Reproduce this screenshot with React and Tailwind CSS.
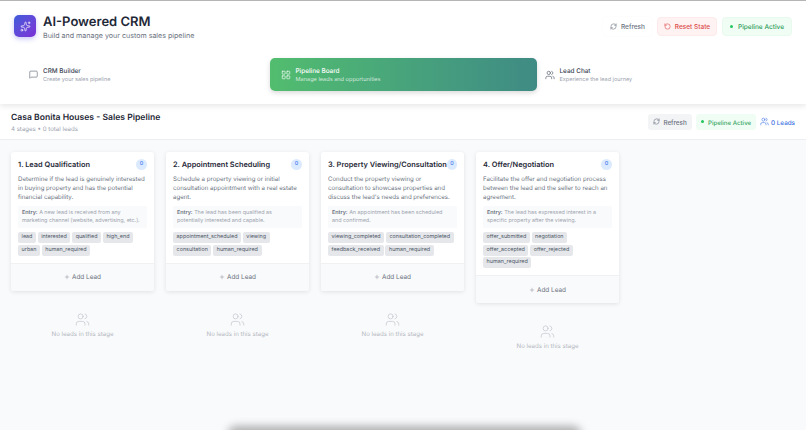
import React from "react";
import { MessageSquare, LayoutGrid, Users, RefreshCw, RotateCcw, Plus, Sparkles } from "lucide-react";

const stages = [
  {
    title: "1. Lead Qualification",
    desc: "Determine if the lead is genuinely interested in buying property and has the potential financial capability.",
    entry: "A new lead is received from any marketing channel (website, advertising, etc.).",
    tags: ["lead", "interested", "qualified", "high_end", "urban", "human_required"],
  },
  {
    title: "2. Appointment Scheduling",
    desc: "Schedule a property viewing or initial consultation appointment with a real estate agent.",
    entry: "The lead has been qualified as potentially interested and capable.",
    tags: ["appointment_scheduled", "viewing", "consultation", "human_required"],
  },
  {
    title: "3. Property Viewing/Consultation",
    desc: "Conduct the property viewing or consultation to showcase properties and discuss the lead's needs and preferences.",
    entry: "An appointment has been scheduled and confirmed.",
    tags: ["viewing_completed", "consultation_completed", "feedback_received", "human_required"],
  },
  {
    title: "4. Offer/Negotiation",
    desc: "Facilitate the offer and negotiation process between the lead and the seller to reach an agreement.",
    entry: "The lead has expressed interest in a specific property after the viewing.",
    tags: ["offer_submitted", "negotiation", "offer_accepted", "offer_rejected", "human_required"],
  },
];

function StageColumn({ stage }) {
  return (
    <div className="w-[143px] shrink-0">
      <div className="bg-white rounded-[3px] shadow-[0_1px_4px_rgba(0,0,0,0.1)] overflow-hidden">
        <div className="px-[7px] pt-[7px] pb-[7px]">
          <div className="flex items-center justify-between h-[11px]">
            <h3 className="text-[7.4px] leading-[11px] font-semibold text-[#1f2937] whitespace-nowrap">{stage.title}</h3>
            <span className="w-[11px] h-[11px] rounded-full bg-[#dbeafe] text-[#2563eb] text-[5.5px] flex items-center justify-center">0</span>
          </div>
          <p className="mt-[5px] text-[6.1px] leading-[9px] text-[#6b7280]">{stage.desc}</p>
          <div className="mt-[4px] bg-[#f9fafb] rounded-[2px] pl-[4px] pr-[6px] py-[3px] text-[5.4px] leading-[8px] text-[#9ca3af]">
            <b className="font-semibold text-[#6b7280]">Entry:</b> {stage.entry}
          </div>
          <div className="mt-[4px] flex flex-wrap gap-[1.7px]">
            {stage.tags.map((tag) => (
              <span key={tag} className="h-[11px] px-[3.6px] rounded-[2px] bg-[#e5e7eb] text-[5.4px] leading-[11px] text-[#4b5563]">
                {tag}
              </span>
            ))}
          </div>
        </div>
        <div className="h-[28px] bg-[#f9fafb] border-t border-[#f0f1f3] flex items-center justify-center gap-[2px] text-[6.4px] text-[#6b7280]">
          <Plus size={6} strokeWidth={1.5} />
          <span className="pt-[2px]">Add Lead</span>
        </div>
      </div>
      <div className="mt-[21px] flex flex-col items-center">
        <Users size={15} strokeWidth={1.2} className="text-[#c4c8cf]" />
        <p className="mt-[3px] text-[6.1px] leading-[9px] text-[#b4b8c0]">No leads in this stage</p>
      </div>
    </div>
  );
}

export default function App() {
  return (
    <div className="relative w-[806px] h-[430px] overflow-hidden bg-[#f9fafb] font-['Inter',sans-serif] [text-rendering:geometricPrecision]">
      {/* TOP HEADER */}
      <header className="relative z-10 h-[104px] bg-white border-t border-[#b5b5b5] shadow-[0_2px_6px_rgba(0,0,0,0.1)]">
        <div className="flex items-center justify-between pl-[14px] pr-[14px] pt-[10px]">
          <div className="flex items-center gap-[7px]">
            <div className="w-[22px] h-[22px] rounded-[5px] bg-gradient-to-br from-[#3b5bdb] to-[#7c2ed6] flex items-center justify-center shadow-[0_2px_5px_rgba(79,70,229,0.3)]">
              <Sparkles size={11} strokeWidth={1.5} className="text-white" />
            </div>
            <div className="pt-[2px]">
              <h1 className="text-[13px] leading-[18px] font-semibold text-[#1f2937]">AI-Powered CRM</h1>
              <p className="text-[7.1px] leading-[10px] text-[#6b7280]">Build and manage your custom sales pipeline</p>
            </div>
          </div>
          <div className="flex items-center gap-[5px]">
            <button className="w-[49px] h-[19px] rounded-[4px] bg-white shadow-[0_0_2px_rgba(0,0,0,0.04)] flex items-center justify-center gap-[4px] text-[6.5px] leading-[9px] font-medium text-[#6b7280]">
              <RefreshCw size={7} />
              <span className="pt-[3px]">Refresh</span>
            </button>
            <button className="w-[60px] h-[19px] rounded-[4px] bg-[#fef2f2] border border-[#fdeaea] flex items-center justify-center gap-[4px] text-[6.5px] leading-[9px] font-medium text-[#dc4a4a]">
              <RotateCcw size={7} />
              <span className="pt-[3px]">Reset State</span>
            </button>
            <div className="w-[70px] h-[19px] rounded-[4px] bg-[#f0fdf4] border border-[#e8faee] flex items-center justify-center gap-[5px] text-[6.5px] leading-[9px] font-medium text-[#2f9e5c]">
              <span className="w-[3px] h-[3px] rounded-full bg-[#22c55e]" />
              <span className="pt-[3px]">Pipeline Active</span>
            </div>
          </div>
        </div>
        <nav className="mt-[17px] flex h-[33px] pl-[3px] pr-[3px]">
          <div className="w-[266.5px] flex items-center gap-[5px] pl-[26px]">
            <MessageSquare size={9} strokeWidth={1.5} className="text-[#4b5563]" />
            <div className="pt-[1px]">
              <div className="text-[6.4px] leading-[10px] font-medium text-[#374151]">CRM Builder</div>
              <div className="text-[5.5px] leading-[8px] text-[#9ca3af]">Create your sales pipeline</div>
            </div>
          </div>
          <div className="w-[267px] rounded-[5px] bg-gradient-to-r from-[#52bd6e] to-[#3f8b84] shadow-[0_2px_5px_rgba(0,0,0,0.15)] flex items-center gap-[5px] pl-[11px] text-white">
            <LayoutGrid size={10} strokeWidth={1.5} />
            <div className="pt-[1px]">
              <div className="text-[6.4px] leading-[10px] font-medium">Pipeline Board</div>
              <div className="text-[5.6px] leading-[8px] text-white/75">Manage leads and opportunities</div>
            </div>
          </div>
          <div className="flex-1 flex items-center gap-[5px] pl-[8px]">
            <Users size={10} strokeWidth={1.5} className="text-[#4b5563]" />
            <div className="pt-[1px]">
              <div className="text-[6.4px] leading-[10px] font-medium text-[#374151]">Lead Chat</div>
              <div className="text-[5.5px] leading-[8px] text-[#9ca3af]">Experience the lead journey</div>
            </div>
          </div>
        </nav>
      </header>

      {/* PIPELINE HEADER */}
      <div className="h-[36px] bg-white border-b border-[#eceef1] flex items-center justify-between pl-[11px] pr-[11px]">
        <div className="pt-[1px]">
          <h2 className="text-[8.6px] leading-[14px] font-semibold text-[#1f2937]">Casa Bonita Houses - Sales Pipeline</h2>
          <p className="text-[6.1px] leading-[9px] text-[#9ca3af]">4 stages • 0 total leads</p>
        </div>
        <div className="flex items-center gap-[4px]">
          <button className="w-[44px] h-[16px] rounded-[3px] bg-[#f3f4f6] flex items-center justify-center gap-[3px] text-[6.3px] leading-[9px] font-medium text-[#6b7280]">
            <RefreshCw size={7} />
            <span className="pt-[3px]">Refresh</span>
          </button>
          <div className="w-[60px] h-[16px] rounded-[3px] bg-[#f0fdf4] flex items-center justify-center gap-[4px] text-[6.1px] leading-[9px] font-medium text-[#3aa866]">
            <span className="w-[3px] h-[3px] rounded-full bg-[#22c55e]" />
            <span className="pt-[3px]">Pipeline Active</span>
          </div>
          <div className="flex items-center gap-[2px] text-[6.3px] leading-[9px] font-medium text-[#3b6fe0]">
            <Users size={9} strokeWidth={1.5} />
            <span className="pt-[3px]">0 Leads</span>
          </div>
        </div>
      </div>

      {/* BOARD */}
      <main className="flex items-start gap-[12px] pl-[11px] pt-[12px]">
        {stages.map((stage) => (
          <StageColumn key={stage.title} stage={stage} />
        ))}
      </main>

      <div className="absolute left-[232px] bottom-[-8px] w-[345px] h-[8px] rounded-full shadow-[0_0_8px_4px_rgba(0,0,0,0.3)]" />
    </div>
  );
}
